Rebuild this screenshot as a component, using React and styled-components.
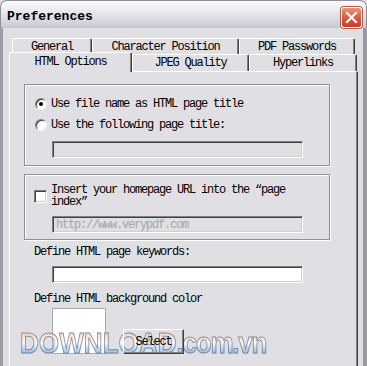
import React from 'react';
import styled, { createGlobalStyle } from 'styled-components';

const mono = `"Liberation Mono", "DejaVu Sans Mono", monospace`;

const Global = createGlobalStyle`
  html, body { margin: 0; padding: 0; background: #e0dfe3; overflow: hidden; }
  #root { width: 367px; height: 366px; }
  * { box-sizing: border-box; }
`;

const Window = styled.div`
  width: 367px;
  height: 366px;
  display: flex;
  flex-direction: column;
  background: #e0dfe3;
  position: relative;
  overflow: hidden;
  font-family: ${mono};
  font-size: 12px;
  letter-spacing: -1.2px;
  color: #000;
`;

const TitleBar = styled.div`
  height: 28px;
  flex: none;
  display: flex;
  align-items: flex-start;
  justify-content: space-between;
  padding: 6px 4px 0 6px;
  background: linear-gradient(#fbfbfd 0%, #ebebf0 35%, #d6d6de 75%, #c6c6d0 100%);
  border: 1px solid #8e8e98;
  border-bottom: none;
  border-radius: 7px 7px 0 0;
`;

const Title = styled.div`
  font-family: ${mono};
  font-weight: bold;
  font-size: 13px;
  letter-spacing: 0;
  line-height: 15px;
  margin-top: 2px;
  color: #000;
`;

const CloseButton = styled.div`
  width: 21px;
  height: 21px;
  border-radius: 3px;
  border: 1px solid #fff;
  box-shadow: 0 0 0 1px #b85a48;
  background: linear-gradient(#e9927c, #d6573f 55%, #c2412a);
  display: flex;
  align-items: center;
  justify-content: center;
`;

const Body = styled.div`
  flex: 1;
  min-height: 0;
  display: flex;
  flex-direction: column;
  border-left: 3px solid #9d9da6;
  border-right: 4px solid #9a9aa3;
  padding: 10px 5px 0 6px;
`;

const TabRow = styled.div`
  display: flex;
  height: ${p => p.$h}px;
  padding: 0 ${p => p.$pad}px;
  flex: none;
`;

const Tab = styled.div`
  width: ${p => p.$w}px;
  flex: none;
  height: ${p => (p.$selected ? p.$h + 3 : p.$h)}px;
  margin-top: ${p => (p.$selected ? -2 : 0)}px;
  margin-bottom: ${p => (p.$selected ? -1 : 0)}px;
  position: relative;
  z-index: ${p => (p.$selected ? 2 : 1)};
  background: #e0dfe3;
  border-top: 1px solid #fff;
  border-left: 1px solid #fff;
  border-right: 1px solid #404040;
  box-shadow: inset -1px 0 #808080;
  border-radius: 2px 2px 0 0;
  display: flex;
  justify-content: center;
  align-items: ${p => (p.$selected ? 'flex-start' : 'center')};
  padding-top: ${p => (p.$selected ? 3 : 0)}px;
  line-height: 12px;
  white-space: nowrap;
`;

const Panel = styled.div`
  flex: 1;
  display: flex;
  flex-direction: column;
  border-top: 1px solid #fff;
  border-left: 1px solid #fff;
  border-right: 1px solid #404040;
  box-shadow: inset -1px 0 #808080;
  padding: 12px 0 0 14px;
`;

const Group = styled.div`
  width: 306px;
  border: 1px solid #8f8f96;
  box-shadow: inset 1px 1px #fff, 1px 1px #fff;
  padding: ${p => p.$pad};
  margin-top: ${p => p.$mt || 0}px;
  display: flex;
  flex-direction: column;
`;

const OptionRow = styled.div`
  display: flex;
  align-items: center;
  gap: 4px;
  height: ${p => p.$h || 16}px;
  margin-top: ${p => p.$mt || 0}px;
  line-height: 12px;
`;

const Radio = styled.span`
  width: 12px;
  height: 12px;
  flex: none;
  border-radius: 50%;
  background: #fff;
  border: 1px solid;
  border-color: #808080 #f4f4f4 #f4f4f4 #808080;
  box-shadow: inset 1px 1px #404040;
  display: flex;
  align-items: center;
  justify-content: center;
  &::after {
    content: '';
    width: 4px;
    height: 4px;
    border-radius: 50%;
    background: ${p => (p.$checked ? '#000' : 'transparent')};
  }
`;

const Checkbox = styled.span`
  width: 13px;
  height: 13px;
  flex: none;
  background: #fff;
  border: 1px solid;
  border-color: #808080 #fff #fff #808080;
  box-shadow: inset 1px 1px #404040, inset -1px -1px #d4d0c8;
`;

const Label = styled.span`
  width: ${p => (p.$w ? `${p.$w}px` : 'auto')};
  line-height: 12px;
`;

const TextBox = styled.div`
  width: 251px;
  height: 17px;
  flex: none;
  margin-top: ${p => p.$mt || 0}px;
  margin-left: ${p => p.$ml || 0}px;
  background: ${p => (p.$disabled ? '#e0dfe3' : '#fff')};
  border: 1px solid;
  border-color: #808080 #fff #fff #808080;
  box-shadow: inset 1px 1px #404040, inset -1px -1px #d4d0c8;
  padding: 2px 0 0 3px;
  line-height: 12px;
  color: #a5a4a8;
  white-space: nowrap;
  overflow: hidden;
`;

const Section = styled.div`
  display: flex;
  flex-direction: column;
  padding-left: 10px;
`;

const FieldLabel = styled.div`
  line-height: 12px;
  margin-top: ${p => p.$mt || 0}px;
  white-space: nowrap;
`;

const ColorRow = styled.div`
  display: flex;
  align-items: flex-end;
  margin-top: 3px;
  margin-left: 18px;
`;

const Swatch = styled.div`
  width: 54px;
  height: 46px;
  background: #fff;
  border: 1px solid #a9a9b0;
`;

const Button = styled.div`
  width: 61px;
  height: 25px;
  margin-left: 17px;
  border: 1px solid;
  border-color: #fff #404040 #404040 #fff;
  box-shadow: inset -1px -1px #808080;
  display: flex;
  align-items: center;
  justify-content: center;
  line-height: 12px;
  position: relative;
  z-index: 3;
`;

const Watermark = styled.div`
  position: absolute;
  left: 20px;
  top: 326px;
  display: flex;
  align-items: baseline;
  transform: scaleX(0.87);
  transform-origin: left center;
  font-family: "Liberation Sans", Arial, sans-serif;
  font-weight: bold;
  font-size: 30px;
  line-height: 34px;
  letter-spacing: 0;
  color: transparent;
  background: linear-gradient(#f3b08a 0%, #fbe1cf 30%, #ffffff 50%, #a9cdf0 70%, #5a9ad6 100%);
  -webkit-background-clip: text;
  background-clip: text;
  -webkit-text-stroke: 1px rgba(90, 104, 128, 0.8);
  opacity: 0.85;
  pointer-events: none;
  z-index: 2;
`;

const WatermarkTail = styled.span`
  letter-spacing: -1.5px;
`;

export default function App() {
  return (
    <>
      <Global />
      <Window>
        <TitleBar>
          <Title>Preferences</Title>
          <CloseButton>
            <svg width="13" height="13" viewBox="0 0 13 13">
              <path d="M2 2 L11 11 M11 2 L2 11" stroke="#fff" strokeWidth="2.2" strokeLinecap="square" />
            </svg>
          </CloseButton>
        </TitleBar>
        <Body>
          <TabRow $h={16} $pad={3}>
            <Tab $w={80} $h={16}>General</Tab>
            <Tab $w={147} $h={16}>Character Position</Tab>
            <Tab $w={116} $h={16}>PDF Passwords</Tab>
          </TabRow>
          <TabRow $h={17} $pad={0}>
            <Tab $w={123} $h={17} $selected>HTML Options</Tab>
            <Tab $w={117} $h={17}>JPEG Quality</Tab>
            <Tab $w={108} $h={17}>Hyperlinks</Tab>
          </TabRow>
          <Panel>
            <Group $pad="11px 0 7px 10px">
              <OptionRow>
                <Radio $checked />
                <Label>Use file name as HTML page title</Label>
              </OptionRow>
              <OptionRow $mt={5}>
                <Radio />
                <Label>Use the following page title:</Label>
              </OptionRow>
              <TextBox $disabled $mt={8} $ml={17} />
            </Group>
            <Group $pad="9px 0 6px 9px" $mt={8}>
              <OptionRow $h={24}>
                <Checkbox />
                <Label $w={245}>Insert your homepage URL into the “page index”</Label>
              </OptionRow>
              <TextBox $disabled $mt={8} $ml={18}>http://www.verypdf.com</TextBox>
            </Group>
            <Section>
              <FieldLabel $mt={6}>Define HTML page keywords:</FieldLabel>
              <TextBox $mt={8} $ml={18} />
              <FieldLabel $mt={10}>Define HTML background color</FieldLabel>
              <ColorRow>
                <Swatch />
                <Button>Select</Button>
              </ColorRow>
            </Section>
          </Panel>
        </Body>
        <Watermark>
          DOWNLOAD<WatermarkTail>.com.vn</WatermarkTail>
        </Watermark>
      </Window>
    </>
  );
}
